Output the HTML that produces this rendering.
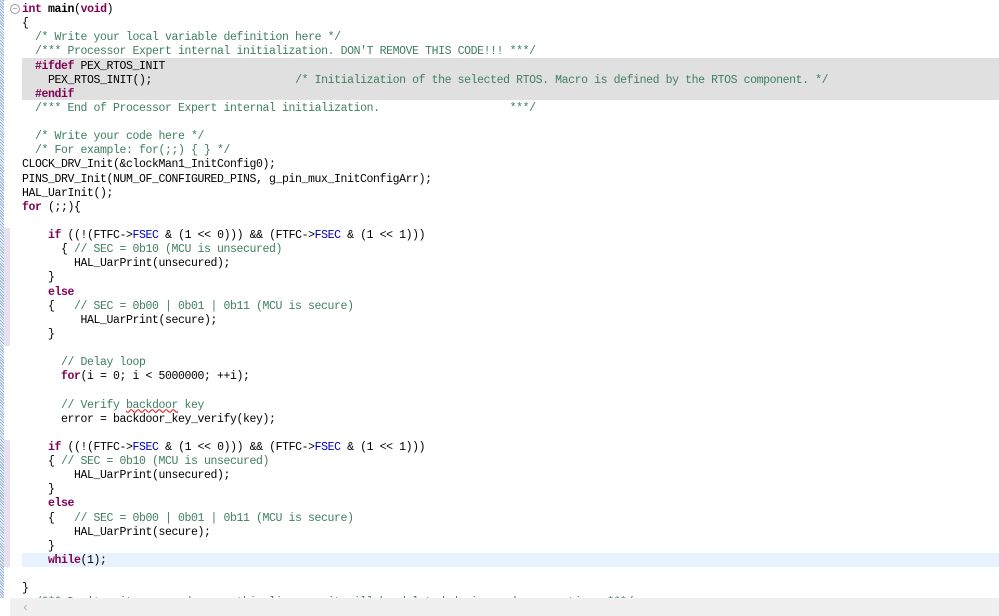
<!DOCTYPE html>
<html><head><meta charset="utf-8"><style>
body{margin:0;width:999px;height:616px;overflow:hidden;background:#fff;position:relative;font-family:"Liberation Mono",monospace}
.strip{position:absolute;left:0;top:0;width:4px;height:598px;background:repeating-linear-gradient(45deg,#8fb1dc 0 1px,#fff 1px 2px)}
.mark{position:absolute;left:4px;width:6px;background:#e8e0ef}
.gray{position:absolute;left:22px;right:0;top:58px;height:42px;background:#e0e0e0}
.cur{position:absolute;left:22px;right:0;top:553px;height:14px;background:#e8f2fe}
pre{position:absolute;left:22px;top:3px;margin:0;font:11.5px/14.12px "Liberation Mono",monospace;letter-spacing:-0.4px;color:#000}
.k{color:#7f0055;font-weight:bold}
.c{color:#3f7f5f}
.f{color:#0000c0}
.sq{text-decoration:underline wavy #e03030}
.fold{position:absolute;left:10px;top:4px;width:8px;height:8px;border:1px solid #999;border-radius:50%;font:8px/8px sans-serif;color:#777;text-align:center}
.sb{position:absolute;left:10px;right:0;top:598px;height:18px;background:#f0f0f0;color:#aaa;font:12px/18px "Liberation Sans",sans-serif}
</style></head><body>
<div class="strip"></div>
<div class="mark" style="top:228px;height:118px"></div>
<div class="mark" style="top:440px;height:127px"></div>
<div class="gray"></div>
<div class="cur"></div>
<div class="fold">−</div>
<pre><span class="k">int</span> <b>main</b>(<span class="k">void</span>)
{
  <span class="c">/* Write your local variable definition here */</span>
  <span class="c">/*** Processor Expert internal initialization. DON'T REMOVE THIS CODE!!! ***/</span>
  <span class="k">#ifdef</span> PEX_RTOS_INIT
    PEX_RTOS_INIT();                      <span class="c">/* Initialization of the selected RTOS. Macro is defined by the RTOS component. */</span>
  <span class="k">#endif</span>
  <span class="c">/*** End of Processor Expert internal initialization.                    ***/</span>

  <span class="c">/* Write your code here */</span>
  <span class="c">/* For example: for(;;) { } */</span>
CLOCK_DRV_Init(&amp;clockMan1_InitConfig0);
PINS_DRV_Init(NUM_OF_CONFIGURED_PINS, g_pin_mux_InitConfigArr);
HAL_UarInit();
<span class="k">for</span> (;;){

    <span class="k">if</span> ((!(FTFC-&gt;<span class="f">FSEC</span> &amp; (1 &lt;&lt; 0))) &amp;&amp; (FTFC-&gt;<span class="f">FSEC</span> &amp; (1 &lt;&lt; 1)))
      { <span class="c">// SEC = 0b10 (MCU is unsecured)</span>
        HAL_UarPrint(unsecured);
    }
    <span class="k">else</span>
    {   <span class="c">// SEC = 0b00 | 0b01 | 0b11 (MCU is secure)</span>
         HAL_UarPrint(secure);
    }

      <span class="c">// Delay loop</span>
      <span class="k">for</span>(i = 0; i &lt; 5000000; ++i);

      <span class="c">// Verify <span class="sq">backdoor</span> key</span>
      error = backdoor_key_verify(key);

    <span class="k">if</span> ((!(FTFC-&gt;<span class="f">FSEC</span> &amp; (1 &lt;&lt; 0))) &amp;&amp; (FTFC-&gt;<span class="f">FSEC</span> &amp; (1 &lt;&lt; 1)))
    { <span class="c">// SEC = 0b10 (MCU is unsecured)</span>
        HAL_UarPrint(unsecured);
    }
    <span class="k">else</span>
    {   <span class="c">// SEC = 0b00 | 0b01 | 0b11 (MCU is secure)</span>
        HAL_UarPrint(secure);
    }
    <span class="k">while</span>(1);

}
  <span class="c">/*** Don't write any code pass this line, or it will be deleted during code generation. ***/</span></pre>
<div class="sb">&nbsp;&nbsp;&nbsp;&nbsp;‹</div>
</body></html>
